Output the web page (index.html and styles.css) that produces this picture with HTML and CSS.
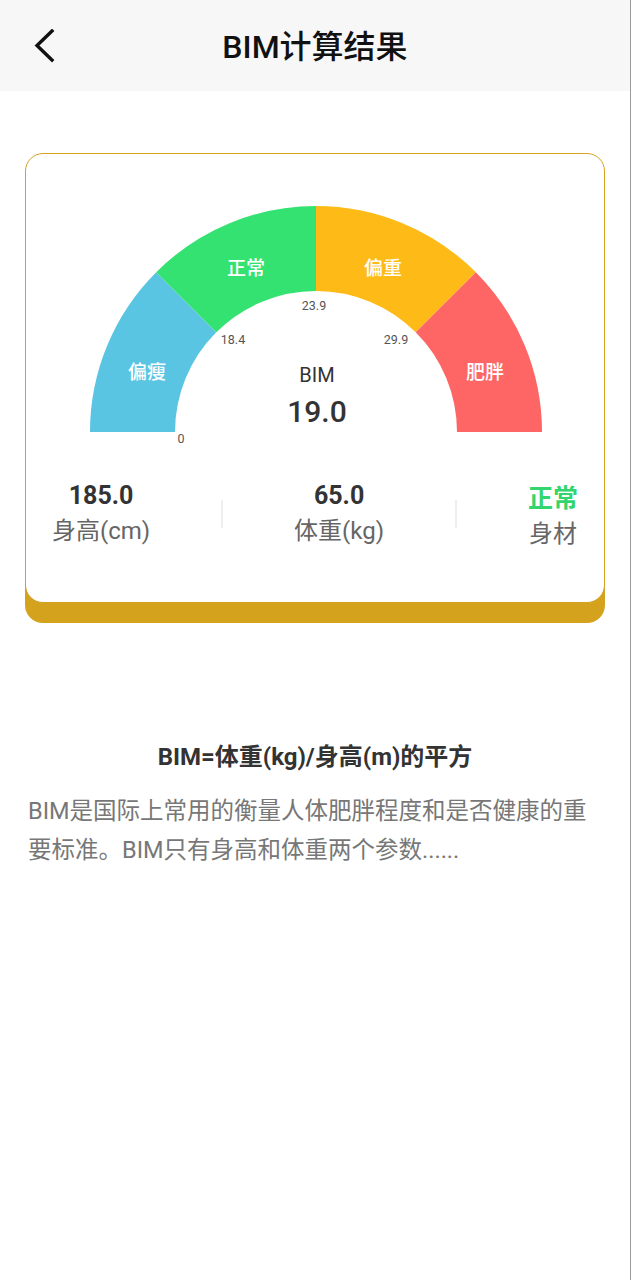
FILE: index.html
```html
<!DOCTYPE html>
<html lang="zh-CN">
<head>
    <meta charset="UTF-8">
    <meta name="viewport" content="width=device-width, initial-scale=1.0">
    <title>BIM计算结果</title>
    <link rel="stylesheet" href="styles.css">
</head>
<body>
    <div class="page">

        <!-- top bar -->
        <header class="top-bar">
            <div class="back">
                <svg width="24" height="34" viewBox="0 0 24 34">
                    <polyline points="18,2 3,16.5 18,31" fill="none" stroke="#111" stroke-width="3.4" stroke-linecap="square"/>
                </svg>
            </div>
            <h1 class="title">BIM计算结果</h1>
            <div></div>
        </header>

        <main class="content">
            <div class="result-card">

                <!-- gauge -->
                <svg class="gauge" width="460" height="242" viewBox="0 0 460 242">
                    <path d="M4 228 A226 226 0 0 1 70.19 68.19 L130.30 128.30 A141 141 0 0 0 89 228 Z" fill="#59c5e2"/>
                    <path d="M70.19 68.19 A226 226 0 0 1 230 2 L230 87 A141 141 0 0 0 130.30 128.30 Z" fill="#34e272"/>
                    <path d="M230 2 A226 226 0 0 1 389.81 68.19 L329.70 128.30 A141 141 0 0 0 230 87 Z" fill="#feba16"/>
                    <path d="M389.81 68.19 A226 226 0 0 1 456 228 L371 228 A141 141 0 0 0 329.70 128.30 Z" fill="#fe6665"/>

                    <text class="seg-label" x="61" y="168">偏瘦</text>
                    <text class="seg-label" x="160" y="64">正常</text>
                    <text class="seg-label" x="297" y="64">偏重</text>
                    <text class="seg-label" x="399" y="168">肥胖</text>

                    <text class="tick" x="147" y="135">18.4</text>
                    <text class="tick" x="228" y="101">23.9</text>
                    <text class="tick" x="310" y="135">29.9</text>
                    <text class="tick" x="95" y="234">0</text>

                    <text class="bim-name" x="231" y="171">BIM</text>
                    <text class="bim-value" x="231" y="207">19.0</text>
                </svg>

                <div class="stats">
                    <div class="stat">
                        <div class="stat-num">185.0</div>
                        <div class="stat-label">身高(cm)</div>
                    </div>
                    <div class="divider"></div>
                    <div class="stat">
                        <div class="stat-num">65.0</div>
                        <div class="stat-label">体重(kg)</div>
                    </div>
                    <div class="divider"></div>
                    <div class="stat stat-right">
                        <div class="stat-num green">正常</div>
                        <div class="stat-label">身材</div>
                    </div>
                </div>
            </div>

            <h2 class="formula">BIM=体重(kg)/身高(m)的平方</h2>
            <p class="desc">BIM是国际上常用的衡量人体肥胖程度和是否健康的重要标准。BIM只有身高和体重两个参数......</p>
        </main>
    </div>
</body>
</html>
```

FILE: styles.css
```css
body {
    margin: 0;
    background-color: #fff;
    font-family: 'Roboto', 'Noto Sans CJK SC', sans-serif;
}

.page {
    width: 630px;
    min-height: 1280px;
    border-right: 1px solid #9a9a9a;
}

.top-bar {
    display: grid;
    grid-template-columns: 90px 1fr 90px;
    align-items: center;
    height: 91px;
    background-color: #f7f7f7;
}

.back {
    display: flex;
    padding-left: 34px;
    padding-top: 1px;
}

.title {
    margin: 0;
    text-align: center;
    font-size: 32px;
    font-weight: 500;
    color: #111;
    line-height: 40px;
    padding-top: 2px;
}

.content {
    padding: 0 25px;
}

.result-card {
    margin-top: 62px;
    border: 1.5px solid #d4a21f;
    border-radius: 18px;
    box-shadow: 0 20px 0 #d5a21e;
    background-color: #fff;
    padding: 50px 0 51px;
    display: flex;
    flex-direction: column;
    align-items: center;
}

.gauge {
    display: block;
    margin-left: 2px;
}

.seg-label {
    font-size: 19px;
    font-weight: 500;
    fill: #fff;
    text-anchor: middle;
    dominant-baseline: central;
}

.tick {
    font-size: 12.5px;
    fill: #555;
    text-anchor: middle;
    dominant-baseline: central;
}

.bim-name {
    font-size: 20px;
    fill: #333;
    text-anchor: middle;
    dominant-baseline: central;
}

.bim-value {
    font-size: 30px;
    font-weight: 500;
    fill: #333;
    text-anchor: middle;
    dominant-baseline: central;
}

.stats {
    align-self: stretch;
    display: flex;
    justify-content: space-between;
    align-items: center;
    padding: 0 26px;
    margin-top: 31px;
}

.stat {
    text-align: center;
}

.stat-num {
    font-size: 25px;
    font-weight: 700;
    color: #333;
    line-height: 32px;
}

.stat-label {
    font-size: 24px;
    color: #666;
    line-height: 34px;
    margin-top: 2px;
}

.stat-right {
    padding-top: 6px;
}

.green {
    color: #33d56e;
}

.divider {
    width: 1.5px;
    height: 28px;
    background-color: #eee;
}

.formula {
    margin: 137px 0 0;
    text-align: center;
    font-size: 24px;
    font-weight: 700;
    color: #333;
    line-height: 34px;
}

.desc {
    margin: 18px 0 0;
    padding: 0 10px 0 3px;
    font-size: 23.5px;
    line-height: 39px;
    color: #777;
}
```
